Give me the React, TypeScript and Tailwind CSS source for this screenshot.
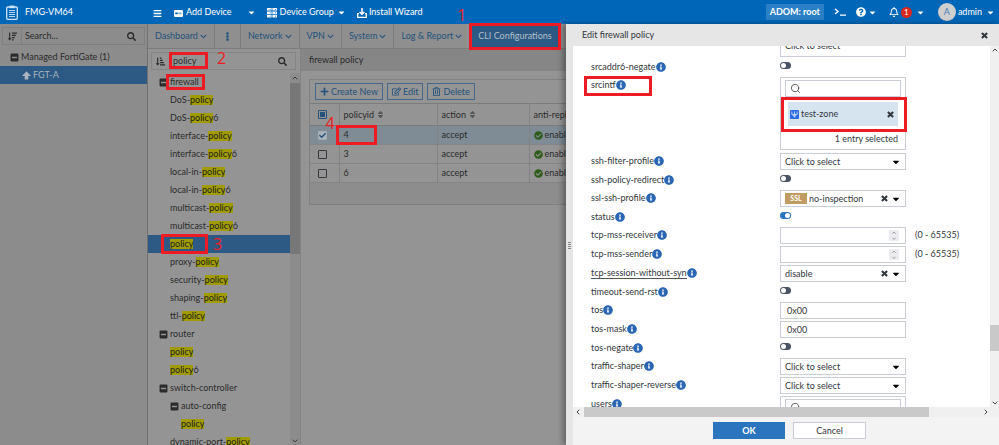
import React, { useState } from "react";
import {
  FaSearch, FaCaretDown, FaChevronDown, FaEllipsisV, FaMinusSquare, FaPlus, FaRegEdit,
  FaRegTrashAlt, FaSort, FaCheckCircle, FaInfoCircle, FaQuestionCircle, FaRegBell, FaCheck,
  FaSortAmountDown, FaSortAmountDownAlt, FaBars,
} from "react-icons/fa";
import { ChevronDown, ChevronLeft, ChevronRight, ChevronUp, Search } from "lucide-react";

function Mark({ className, n, nClass = "" }: { className: string; n?: string; nClass?: string }) {
  return (
    <span className={`pointer-events-none absolute z-30 border-[3px] border-[#ed1c24] ${className}`}>
      {n && (
        <span className={`absolute font-['Open_Sans',sans-serif] text-[16px] leading-4 font-normal text-[#ed1c24] ${nClass}`}>{n}</span>
      )}
    </span>
  );
}

function ClipboardIcon() {
  return (
    <svg width="12" height="15" viewBox="0 0 12 15" fill="none" stroke="#cfe4f7" aria-hidden="true">
      <rect x="0.7" y="2" width="10.6" height="12.3" rx="1" strokeWidth="1.3" />
      <rect x="3.5" y="0.6" width="5" height="2.6" fill="#cfe4f7" stroke="none" />
      <path d="M3 5.5h6M3 7.5h6M3 9.5h6M3 11.5h6" strokeWidth="0.9" />
    </svg>
  );
}

function DeviceIcon() {
  return (
    <svg width="9" height="7" viewBox="0 0 9 7" className="mt-0.5" aria-hidden="true">
      <rect width="9" height="7" rx="1" fill="#fff" />
      <path d="M1.2 2.6h2.6v1.6H1.2zM4.6 2.6h.8v1.6h-.8zM6.4 2.6h.8v1.6h-.8z" fill="#0067b8" />
    </svg>
  );
}

function GroupIcon() {
  return (
    <svg width="10" height="10" viewBox="0 0 10 10" className="mt-0.5" aria-hidden="true">
      <path d="M0 0h4.6v2.6H0zM5.4 0H10v2.6H5.4zM0 3.4h4.6V6H0zM5.4 3.4H10V6H5.4zM0 6.8h4.6v2.8H0zM5.4 6.8H10v2.8H5.4z" fill="#fff" />
      <path d="M2.6 1h1v.8h-1zM8 1h1v.8H8zM2.6 4.4h1v.8h-1zM8 4.4h1v.8H8zM2.6 7.8h1v.8h-1zM8 7.8h1v.8H8z" fill="#0067b8" />
    </svg>
  );
}

function InstallIcon() {
  return (
    <svg width="10" height="10" viewBox="0 0 10 10" fill="none" stroke="#fff" className="mt-0.5" aria-hidden="true">
      <path d="M5 0v6M2.6 4L5 6.3 7.4 4" strokeWidth="1.5" />
      <path d="M2 5.7H.7v3.6h8.6V5.7H8" strokeWidth="1.3" />
    </svg>
  );
}

function ZoneIcon() {
  return (
    <svg width="9" height="9" viewBox="0 0 9 9" fill="none" aria-hidden="true">
      <rect width="9" height="9" rx="1" fill="#2b6be4" />
      <path d="M1.8 1.5v2.9h5.4V1.5M4.5 1.5v6M3.2 4.4v1.6h2.6V4.4" stroke="#d6e4f5" strokeWidth="0.8" />
    </svg>
  );
}

function BlockArrowUp() {
  return (
    <svg width="9" height="9" viewBox="0 0 9 9" fill="currentColor" aria-hidden="true">
      <path d="M4.5 0.3L9 5H6.3v3.5H2.7V5H0z" />
    </svg>
  );
}

function Cross() {
  return (
    <svg width="7" height="7" viewBox="0 0 7 7" fill="none" stroke="currentColor" strokeWidth="2.1" aria-hidden="true">
      <path d="M0.9 0.9l5.2 5.2M6.1 0.9L0.9 6.1" />
    </svg>
  );
}

const tabs = ["Network", "VPN", "System", "Log & Report"];

function Header() {
  return (
    <header className="flex h-6 shrink-0 items-center bg-[#0067b8] whitespace-nowrap text-white">
      <div className="flex w-[153px] items-center gap-[7px] pl-1.5">
        <ClipboardIcon />
        <span>FMG-VM64</span>
      </div>
      <button aria-label="Menu" className="mr-3 pt-0.5"><FaBars size={9} /></button>
      <button className="mr-[11px] flex items-center gap-[3px]">
        <DeviceIcon />Add Device<FaCaretDown size={9} className="ml-3" />
      </button>
      <button className="mr-[11px] flex items-center gap-[3px]">
        <GroupIcon />Device Group<FaCaretDown size={9} />
      </button>
      <button className="flex items-center gap-0.5"><InstallIcon />Install Wizard</button>
      <div className="ml-auto flex items-center pr-1">
        <button className="mr-2.5 h-4 bg-[#2a7fc5] px-1 leading-4 font-bold">ADOM: root</button>
        <button aria-label="Console" className="mr-2.5">
          <svg width="12" height="8" viewBox="0 0 12 8" fill="none" stroke="#fff" strokeWidth="1.3" aria-hidden="true"><path d="M1 1l3 2.5L1 6M6 7.2h6" /></svg>
        </button>
        <button aria-label="Help" className="mr-3 flex items-center gap-0.5"><FaQuestionCircle size={10} /><FaCaretDown size={9} /></button>
        <button aria-label="Notifications" className="mr-[13px] flex items-center gap-0.5">
          <FaRegBell size={10} />
          <span className="h-[11px] w-[11px] rounded-full bg-[#d9281e] text-[8px] leading-[11px]">1</span>
          <FaCaretDown size={9} className="ml-0.5" />
        </button>
        <button className="flex items-center gap-0.5">
          <span className="h-[18px] w-[18px] rounded-full bg-[#cfcfcf] text-[9px] leading-[18px] text-[#3f78b0]">A</span>
          admin<FaCaretDown size={9} className="ml-0.5" />
        </button>
      </div>
    </header>
  );
}

function DevicePanel() {
  return (
    <aside className="w-[148px] shrink-0 border-r border-[#707070] bg-[#8c8c8c]">
      <div className="mx-0.5 mt-[3px] flex h-[18px] items-center border border-[#7f7f7f]">
        <button aria-label="Sort devices" className="flex h-full w-[19px] items-center justify-center border-r border-[#7f7f7f]"><FaSortAmountDown size={9} /></button>
        <input aria-label="Search devices" placeholder="Search..." className="min-w-0 flex-1 bg-transparent pl-[3px] outline-none placeholder:text-[#2b2b2b]" />
        <FaSearch size={9} className="mr-2" />
      </div>
      <div className="mt-[3px] flex h-[18px] items-center gap-0.5 pl-2.5"><FaMinusSquare size={9} />Managed FortiGate (1)</div>
      <div className="flex h-[18px] items-center gap-0.5 bg-[#2c5a84] pl-[22px] text-[#a9b4bf]"><BlockArrowUp />FGT-A</div>
    </aside>
  );
}

type Node = { pre?: string; hit?: string; post?: string; depth: number; group?: boolean; selected?: boolean };
const nodes: Node[] = [
  { pre: "firewall", depth: 0, group: true },
  { pre: "DoS-", hit: "policy", depth: 1 },
  { pre: "DoS-", hit: "policy", post: "6", depth: 1 },
  { pre: "interface-", hit: "policy", depth: 1 },
  { pre: "interface-", hit: "policy", post: "6", depth: 1 },
  { pre: "local-in-", hit: "policy", depth: 1 },
  { pre: "local-in-", hit: "policy", post: "6", depth: 1 },
  { pre: "multicast-", hit: "policy", depth: 1 },
  { pre: "multicast-", hit: "policy", post: "6", depth: 1 },
  { hit: "policy", depth: 1, selected: true },
  { pre: "proxy-", hit: "policy", depth: 1 },
  { pre: "security-", hit: "policy", depth: 1 },
  { pre: "shaping-", hit: "policy", depth: 1 },
  { pre: "ttl-", hit: "policy", depth: 1 },
  { pre: "router", depth: 0, group: true },
  { hit: "policy", depth: 1 },
  { hit: "policy", post: "6", depth: 1 },
  { pre: "switch-controller", depth: 0, group: true },
  { pre: "auto-config", depth: 1, group: true },
  { hit: "policy", depth: 2 },
  { pre: "dynamic-port-", hit: "policy", depth: 1 },
];
const indent = ["pl-[11px]", "pl-[22px]", "pl-[33px]"];

function Tree() {
  return (
    <div className="flex w-[153px] shrink-0 flex-col border-r border-[#838383] bg-[#949494]">
      <div className="relative mt-[3px] mr-1 ml-[3px] flex h-[18px] shrink-0 items-center border border-[#858585]">
        <button aria-label="Sort tree" className="flex w-[17px] justify-center"><FaSortAmountDownAlt size={9} /></button>
        <input aria-label="Filter tree" defaultValue="policy" className="min-w-0 flex-1 bg-transparent pl-1 outline-none" />
        <FaSearch size={9} className="mr-2" />
        <Mark className="-top-px left-[17px] h-[17px] w-[39px]" n="2" nClass="left-[45px] -top-[5px]" />
      </div>
      <div className="mt-[3px] flex min-h-0 flex-1">
        <ul className="min-w-0 flex-1 overflow-hidden">
          {nodes.map((n, i) => (
            <li key={i} className={`relative flex h-[18px] items-center ${indent[n.depth]} ${n.selected ? "bg-[#2c5a84]" : ""}`}>
              {n.group && <FaMinusSquare size={9} className="mr-0.5" />}
              {n.pre}
              {n.hit && <mark className="bg-[#a09c00] leading-[10px] text-[#1c1c1c]">{n.hit}</mark>}
              {n.post}
              {i === 0 && <Mark className="left-[18px] top-[1px] h-4 w-[39px]" />}
              {n.selected && <Mark className="-top-px left-[13px] h-5 w-[47px]" n="3" nClass="left-[49px] -top-px" />}
            </li>
          ))}
        </ul>
        <div className="flex w-2.5 flex-col items-center bg-[#8c8c8c] text-[#3a3a3a]">
          <ChevronUp size={8} strokeWidth={3} className="my-px shrink-0" />
          <div className="h-[171px] w-full bg-[#777777]" />
          <ChevronDown size={8} strokeWidth={3} className="mt-auto shrink-0" />
        </div>
      </div>
    </div>
  );
}

function Tick({ state, label }: { state: "some" | "on" | "off"; label: string }) {
  return (
    <span className="relative ml-1 block h-[9px] w-[9px]">
      <input
        type="checkbox"
        aria-label={label}
        defaultChecked={state === "on"}
        className={`block h-[9px] w-[9px] appearance-none rounded-[1px] border ${state === "some" ? "border-[#24527c]" : state === "on" ? "border-[#a3adb6] bg-[#a9b2ba]" : "border-[#33373b]"}`}
      />
      {state === "some" && <span className="pointer-events-none absolute inset-0.5 bg-[#24527c]" />}
      {state === "on" && <FaCheck size={7} className="pointer-events-none absolute top-px left-px text-[#24527c]" />}
    </span>
  );
}

const toolButton = "flex h-[17px] items-center gap-0.5 border border-[#46688a] px-1 text-[#24527c]";
const cell = "border-r border-[#838383] px-1";

function PolicyTable() {
  return (
    <div className="min-w-0 flex-1 bg-[#949494]">
      <h1 className="h-[22px] bg-[#868686] pl-2 leading-[22px]">firewall policy</h1>
      <div className="mt-2 ml-2 border border-[#808080]">
        <div className="flex h-[23px] items-center gap-1 pl-[5px]">
          <button className={toolButton}><FaPlus size={9} />Create New</button>
          <button className={toolButton}><FaRegEdit size={9} />Edit</button>
          <button className={toolButton}><FaRegTrashAlt size={9} />Delete</button>
        </div>
        <table className="w-full table-fixed border-collapse text-left">
          <colgroup><col className="w-[29px]" /><col className="w-[98px]" /><col className="w-[92px]" /><col /></colgroup>
          <thead>
            <tr className="h-[22px] border-y border-[#7c7c7c]">
              <th className={cell}><Tick state="some" label="Select all" /></th>
              {["policyid", "action", "anti-replay"].map((h) => (
                <th key={h} className={`${cell} font-normal`}>
                  <span className="flex items-center gap-0.5">{h}<FaSort size={9} className="text-[#555]" /></span>
                </th>
              ))}
            </tr>
          </thead>
          <tbody>
            {["4", "3", "6"].map((id) => (
              <tr key={id} className={`h-[19px] border-b border-[#858585] ${id === "4" ? "bg-[#7f8b95]" : ""}`}>
                <td className={cell}><Tick state={id === "4" ? "on" : "off"} label={`Select policy ${id}`} /></td>
                <td className={`relative ${cell}`}>
                  {id}
                  {id === "4" && <Mark className="-left-1 -top-px h-5 w-[41px]" n="4" nClass="-left-[13px] -top-[13px]" />}
                </td>
                <td className={cell}>accept</td>
                <td className={cell}><span className="flex items-center gap-0.5"><FaCheckCircle size={9} className="text-[#2f5c1c]" />enable</span></td>
              </tr>
            ))}
          </tbody>
        </table>
        <div className="h-[21px] bg-[#8d8d8d]" />
      </div>
    </div>
  );
}

function Tabs() {
  const tab = "flex h-full items-center gap-0.5 border-r border-[#7c7c7c] text-[#24527c]";
  return (
    <nav className="flex h-[25px] shrink-0 items-center border-b border-[#7c7c7c] bg-[#8f8f8f]">
      <button className={`${tab} px-[7px]`}>Dashboard<FaChevronDown size={7} /></button>
      <button aria-label="More" className={`${tab} px-2`}><FaEllipsisV size={9} /></button>
      {tabs.map((t) => (
        <button key={t} className={`${tab} px-[7px] whitespace-nowrap`}>{t}<FaChevronDown size={7} /></button>
      ))}
      <button className="relative flex h-full items-center bg-[#2c5a84] px-2 whitespace-nowrap text-[#b3bfca]">
        CLI Configurations
        <Mark className="-top-px -right-px -left-px h-[27px]" n="1" nClass="-left-[15px] -top-[19px]" />
      </button>
      <button className="pl-2 whitespace-nowrap text-[#24527c]">Import</button>
    </nav>
  );
}

const box = "h-[17px] w-[126px] border border-[#c9cdd5] bg-white";

function Toggle({ id, on }: { id: string; on?: boolean }) {
  const [value, setValue] = useState(!!on);
  return (
    <input
      id={id}
      type="checkbox"
      role="switch"
      checked={value}
      onChange={() => setValue(!value)}
      className="relative block h-[7px] w-[11px] appearance-none rounded-full bg-[#4a5464] before:absolute before:top-px before:left-px before:h-[5px] before:w-[5px] before:rounded-full before:bg-white checked:bg-[#2a75bd] checked:before:left-[5px]"
    />
  );
}

function Picker({ id, value, clear, ssl }: { id: string; value: string; clear?: boolean; ssl?: boolean }) {
  return (
    <span className={`relative flex items-center ${box}`}>
      {ssl && <span className="ml-1 h-[11px] w-[22px] shrink-0 bg-[#c09c62] text-center text-[7px] leading-[11px] font-bold text-white">SSL</span>}
      <select id={id} className={`min-w-0 flex-1 appearance-none bg-transparent outline-none ${ssl ? "pl-0.5" : "pl-1"}`}>
        <option>{value}</option>
      </select>
      {clear && <button type="button" aria-label="Clear" className="absolute right-[17px]"><Cross /></button>}
      <FaCaretDown size={10} className="pointer-events-none absolute right-1 text-black" />
    </span>
  );
}

function NumberBox({ id }: { id: string }) {
  return (
    <span className={`flex items-center justify-end pr-1.5 ${box}`}>
      <input id={id} inputMode="numeric" className="min-w-0 flex-1 bg-transparent pl-1.5 outline-none" />
      <span className="flex h-[11px] w-[10px] flex-col items-center justify-center bg-[#ececf0] text-[#777]">
        <ChevronUp size={6} strokeWidth={3} /><ChevronDown size={6} strokeWidth={3} />
      </span>
    </span>
  );
}

function SearchBox({ id }: { id: string }) {
  return (
    <span className="mx-1 mt-0.5 flex h-[17px] items-center border border-[#c9cdd5] pl-1">
      <Search size={11} className="shrink-0 text-[#555]" />
      <input id={id} className="min-w-0 flex-1 pl-1 outline-none" />
    </span>
  );
}

function Field({ name, tall, toggle, underline, note, mark, children }: {
  name: string; tall?: boolean; toggle?: boolean; underline?: boolean; note?: string; mark?: boolean; children: React.ReactNode;
}) {
  return (
    <div className={`relative flex shrink-0 pl-[18px] ${tall ? "h-[76px]" : toggle ? "h-[18px]" : "h-[19px]"}`}>
      <label htmlFor={name} className="flex h-[17px] w-[189px] shrink-0 items-center">
        <span className={underline ? "border-b border-[#555] leading-[11px]" : ""}>{name}</span>
        <FaInfoCircle size={10} className="text-[#2a66b3]" />
      </label>
      <div className={toggle ? "pt-1" : "pt-px"}>{children}</div>
      {note && <span className="ml-[9px] leading-[17px]">{note}</span>}
      {mark && <Mark className="top-0 left-[11px] h-5 w-[68px]" />}
    </div>
  );
}

function Drawer() {
  return (
    <section className="absolute inset-y-0 right-0 z-20 flex w-[433px] flex-col bg-[#e6e6e6] text-[#33373d] shadow-[-3px_0_6px_rgba(0,0,0,0.35)]">
      <div className="flex h-[22px] shrink-0 items-center justify-between pr-[11px] pl-4">
        <h2>Edit firewall policy</h2>
        <button aria-label="Close"><Cross /></button>
      </div>
      <div className="flex min-h-0 flex-1">
        <div className="flex w-[7px] shrink-0 flex-col items-center justify-center gap-px">
          {[0, 1, 2, 3].map((i) => <span key={i} className="h-px w-[3px] bg-[#888]" />)}
        </div>
        <div className="flex min-w-0 flex-1 flex-col bg-[#f3f3f3]">
          <div className="flex min-h-0 flex-1">
            <form className="flex min-w-0 flex-1 flex-col overflow-hidden bg-white">
              <div className="flex h-3 shrink-0 items-end pb-px pl-[207px]">
                <button type="button" className="h-[22px] w-[126px] border border-[#c9cdd5] pl-1 text-left">Click to select</button>
              </div>
              <Field name="srcaddr6-negate" toggle><Toggle id="srcaddr6-negate" /></Field>
              <Field name="srcintf" tall mark>
                <div className="relative h-[73px] w-[126px] border border-[#c9cdd5]">
                  <SearchBox id="srcintf" />
                  <div className="mx-[7px] mt-[5px] flex h-6 items-center gap-0.5 bg-[#d6e4f0] pr-1 pl-0.5">
                    <ZoneIcon />test-zone
                    <button type="button" aria-label="Remove test-zone" className="ml-auto"><Cross /></button>
                  </div>
                  <p className="mt-[5px] pr-[7px] text-right leading-[16px]">1 entry selected</p>
                  <Mark className="top-[19px] left-0 h-[35px] w-[126px]" />
                </div>
              </Field>
              <Field name="ssh-filter-profile"><Picker id="ssh-filter-profile" value="Click to select" /></Field>
              <Field name="ssh-policy-redirect" toggle><Toggle id="ssh-policy-redirect" /></Field>
              <Field name="ssl-ssh-profile"><Picker id="ssl-ssh-profile" value="no-inspection" clear ssl /></Field>
              <Field name="status" toggle><Toggle id="status" on /></Field>
              <Field name="tcp-mss-receiver" note="(0 - 65535)"><NumberBox id="tcp-mss-receiver" /></Field>
              <Field name="tcp-mss-sender" note="(0 - 65535)"><NumberBox id="tcp-mss-sender" /></Field>
              <Field name="tcp-session-without-syn" underline><Picker id="tcp-session-without-syn" value="disable" clear /></Field>
              <Field name="timeout-send-rst" toggle><Toggle id="timeout-send-rst" /></Field>
              <Field name="tos"><input id="tos" defaultValue="0x00" className={`block pl-1.5 outline-none ${box}`} /></Field>
              <Field name="tos-mask"><input id="tos-mask" defaultValue="0x00" className={`block pl-1.5 outline-none ${box}`} /></Field>
              <Field name="tos-negate" toggle><Toggle id="tos-negate" /></Field>
              <Field name="traffic-shaper"><Picker id="traffic-shaper" value="Click to select" /></Field>
              <Field name="traffic-shaper-reverse"><Picker id="traffic-shaper-reverse" value="Click to select" /></Field>
              <Field name="users" tall>
                <div className="h-[73px] w-[126px] border border-[#c9cdd5]"><SearchBox id="users" /></div>
              </Field>
            </form>
            <div className="flex w-[9px] shrink-0 flex-col items-center bg-[#f0f0f0] text-[#444]">
              <ChevronUp size={8} strokeWidth={3} className="shrink-0" />
              <div className="flex-[271]" />
              <div className="h-[26px] w-full bg-[#c9c9c9]" />
              <div className="flex-[48]" />
              <ChevronDown size={8} strokeWidth={3} className="shrink-0" />
            </div>
          </div>
          <div className="flex h-2.5 shrink-0 items-center bg-[#f0f0f0] pr-[9px] pl-px text-[#444]">
            <ChevronLeft size={8} strokeWidth={3} className="mr-0.5 shrink-0" />
            <div className="h-full flex-[344] bg-[#c9c9c9]" />
            <div className="flex-[53]" />
            <ChevronRight size={8} strokeWidth={3} className="shrink-0" />
          </div>
          <div className="flex h-7 shrink-0 items-center justify-center gap-2 pb-px pl-[7px]">
            <button className="h-[17px] w-[72px] bg-[#2a75bd] leading-[17px] font-bold text-white">OK</button>
            <button className="h-[17px] w-[73px] border border-[#c9cdd5] bg-white leading-[15px]">Cancel</button>
          </div>
        </div>
      </div>
    </section>
  );
}

export default function App() {
  return (
    <div className="flex h-screen flex-col overflow-hidden bg-[#949494] font-[Lato,sans-serif] text-[9px] leading-[14px] text-[#2b2b2b]">
      <Header />
      <div className="relative flex min-h-0 flex-1">
        <DevicePanel />
        <main className="flex min-w-0 flex-1 flex-col">
          <Tabs />
          <div className="flex min-h-0 flex-1">
            <Tree />
            <PolicyTable />
          </div>
        </main>
        <Drawer />
      </div>
    </div>
  );
}
